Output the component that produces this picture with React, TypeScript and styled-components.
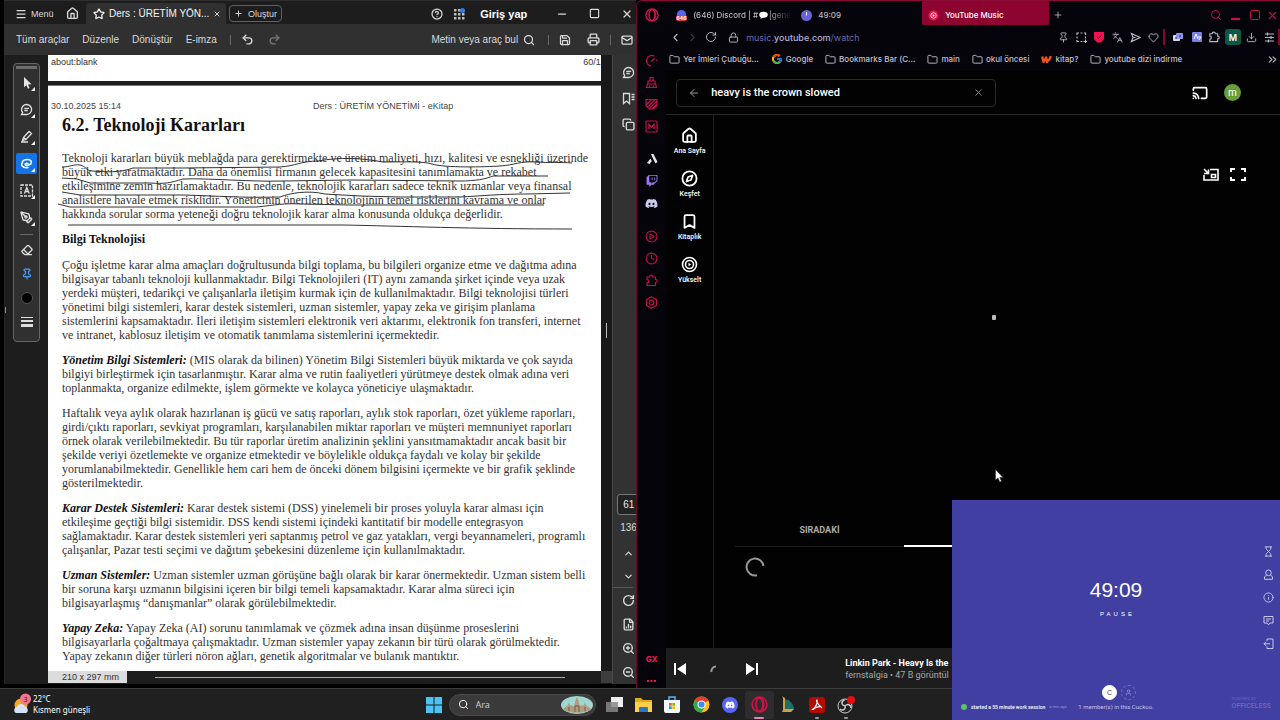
import React from 'react';
import styled, { createGlobalStyle } from 'styled-components';
import {
  Menu, House, Star, X, Plus, CircleHelp, Minus, Square, Undo2, Redo2, Search, Save, Printer, Mail,
  PenTool, Eraser, Pin, Bookmark, Copy, ChevronUp, ChevronDown,
  RotateCw, FileChartColumn, ZoomIn, ZoomOut, ChevronLeft, ChevronRight, Lock, Languages,
  Heart, Download, Folder, ChevronsRight, ArrowLeft, Cast, CirclePlay, Clock,
  Hourglass, User, Info, Compass,
} from 'lucide-react';
import { FaDiscord, FaTwitch } from 'react-icons/fa';
import { FcGoogle } from 'react-icons/fc';

const Global = createGlobalStyle`
  * { box-sizing: border-box; }
  body { margin: 0; background: #000; font-family: "Liberation Sans", Arial, sans-serif; }
  button, input { font: inherit; color: inherit; }
  p, h1, h2 { margin: 0; }
  svg { display: block; flex: none; }
`;

const Desktop = styled.div`
  position: relative;
  display: flex;
  flex-direction: column;
  min-height: 100vh;
  overflow: hidden;
`;
const Windows = styled.main`
  flex: 1;
  display: flex;
`;
const Plain = styled.button<{ $w?: number; $h?: number }>`
  display: inline-flex;
  align-items: center;
  justify-content: center;
  flex: none;
  padding: 0;
  border: 0;
  background: none;
  white-space: nowrap;
  width: ${p => (p.$w ? `${p.$w}px` : 'auto')};
  height: ${p => (p.$h ? `${p.$h}px` : 'auto')};
`;
const Spacer = styled.div`
  flex: 1;
`;
const Gap = styled.span<{ $w: number }>`
  flex: none;
  width: ${p => p.$w}px;
`;

/* ---------- document reader ---------- */

const Reader = styled.section`
  flex: none;
  width: 49.7%;
  min-width: 0;
  display: flex;
  flex-direction: column;
  overflow: hidden;
  padding-bottom: 4px;
  border-left: 4px solid #000;
  background: linear-gradient(#000, #000) bottom / 100% 4px no-repeat #1d1d1d;
  color: #dadada;
  font-size: 10px;
  .lucide { stroke-width: 2.5; }
`;
const ReaderTitle = styled.header`
  display: flex;
  align-items: center;
  height: 24px;
  padding: 2px 0 0 11px;
  border-top: 1px solid #2e2e2e;
`;
const MenuButton = styled(Plain)`
  gap: 4px;
  width: 46px;
  justify-content: flex-start;
  font-size: 9px;
`;
const DocTab = styled.div`
  display: flex;
  align-items: center;
  gap: 4px;
  width: 140px;
  height: 22px;
  padding: 0 7px;
  margin-left: 3px;
  border-radius: 4px 4px 0 0;
  background: #303030;
  color: #f4f4f4;
`;
const TabName = styled.span`
  flex: 1;
  white-space: nowrap;
`;
const CreateButton = styled(Plain)`
  gap: 5px;
  width: 53px;
  height: 17px;
  margin-left: 3px;
  border: 1px solid #606060;
  border-radius: 4px;
  font-size: 9px;
`;
const SignIn = styled(Plain)`
  justify-content: flex-start;
  width: 84px;
  padding-left: 10px;
  color: #fff;
  font-size: 11px;
  font-weight: 700;
`;
const ReaderTools = styled.nav`
  display: flex;
  align-items: center;
  height: 31px;
  padding-left: 12px;
  background: #303030;
`;
const MenuLinks = styled.div`
  display: flex;
  gap: 13px;
  margin-right: 13px;
`;
const Divider = styled.span`
  flex: none;
  width: 1px;
  height: 10px;
  background: #666;
`;
const ReaderBody = styled.div`
  flex: 1;
  display: flex;
`;
const Rail = styled.aside`
  flex: none;
  display: flex;
  align-items: flex-start;
  width: 44px;
  padding-top: 8px;
  border-left: 1px solid #252525;
`;
const RailGrip = styled.span`
  width: 1px;
  height: 6px;
  margin: 244px 7px 0 0;
  background: #888;
`;
const ToolBox = styled.div`
  display: flex;
  flex-direction: column;
  align-items: center;
  width: 27px;
  height: 279px;
  border: 1px solid #666;
  border-radius: 4px;
  background: #303030;
`;
const Grab = styled.span`
  width: 21px;
  height: 3px;
  margin: 2px 0 3px;
  background: #6d6d6d;
`;
const Tool = styled(Plain)<{ $on?: boolean; $more?: boolean; $low?: boolean }>`
  position: relative;
  width: 21px;
  height: ${p => (p.$low ? '20px' : '21px')};
  margin-bottom: ${p => (p.$low ? '4px' : '6px')};
  border-radius: 2px;
  background: ${p => (p.$on ? '#1473e6' : 'none')};
  color: #e0e0e0;
  &::after {
    content: '';
    display: ${p => (p.$more ? 'block' : 'none')};
    position: absolute;
    right: 2px;
    bottom: 2px;
    border: 2px solid transparent;
    border-right-color: #fff;
    border-bottom-color: #fff;
  }
`;
const ToolRule = styled.span`
  width: 13px;
  height: 1px;
  margin: 0 0 5px;
  background: #666;
`;
const Pages = styled.div`
  flex: 1;
  min-width: 0;
  display: flex;
  flex-direction: column;
`;
const PageEnd = styled.div`
  display: flex;
  justify-content: space-between;
  height: 26px;
  padding: 1px 0 0 3px;
  overflow: hidden;
  margin-bottom: 4px;
  background: #fff;
  color: #333;
  font-size: 9px;
  line-height: 12px;
  white-space: nowrap;
`;
const PageNo = styled.span`
  width: 18px;
`;
const Page = styled.article`
  position: relative;
  flex: 1;
  overflow: hidden;
  padding: 15px 0 0 14px;
  border-top: 1px solid #777;
  background: #fff;
  color: #333;
  font: 12px/14px "Liberation Serif", "Times New Roman", serif;
  white-space: nowrap;
`;
const RunningHead = styled.div`
  display: grid;
  grid-template-columns: 262px 1fr;
  margin-left: -11px;
  color: #444;
  font: 9px/10px "Liberation Sans", Arial, sans-serif;
`;
const Chapter = styled.h1`
  margin: 4px 0 16px;
  color: #111;
  font-size: 18px;
  line-height: 20px;
`;
const SubHead = styled.h2`
  margin-bottom: 12px;
  color: #111;
  font-size: 12px;
  line-height: 14px;
`;
const Para = styled.p`
  margin-bottom: 11px;
  &:last-of-type { margin-bottom: 0; }
`;
const Term = styled.em`
  font-weight: 700;
  color: #111;
`;
const PenMarks = styled.svg`
  position: absolute;
  left: 0;
  top: 0;
  fill: none;
  stroke: #333;
  stroke-width: 1;
`;
const PageFoot = styled.footer`
  display: flex;
  align-items: center;
  height: 13px;
  padding-bottom: 1px;
`;
const PageSize = styled.span`
  width: 79px;
  height: 12px;
  padding-left: 14px;
  background: #dcdcdc;
  color: #333;
  font-size: 9px;
  line-height: 12px;
  white-space: nowrap;
`;
const HScroll = styled.span`
  flex: 1;
  height: 1px;
  margin: 0 36px 0 28px;
  background: #aaa;
`;
const VTrack = styled.div`
  flex: none;
  display: flex;
  flex-direction: column;
  align-items: center;
  width: 11px;
  padding-top: 268px;
  background: #191919;
`;
const VThumb = styled.span`
  width: 1px;
  height: 15px;
  background: #bbb;
`;
const Corner = styled.span`
  width: 11px;
  height: 12px;
  margin: auto 0 1px;
  background: #3d3d3d;
`;
const SidePanel = styled.aside`
  flex: none;
  display: flex;
  flex-direction: column;
  align-items: flex-start;
  width: 24px;
  overflow: hidden;
  padding: 5px 0 0 4px;
  border-left: 1px solid #484848;
  background: #323232;
`;
const PageInput = styled.input`
  flex: none;
  width: 28px;
  height: 21px;
  margin: auto 0 7px;
  padding: 0 0 0 5px;
  border: 1px solid #777;
  border-radius: 3px;
  background: #222;
  color: #e8e8e8;
  font-size: 10px;
`;
const PageTotal = styled.span`
  margin: 0 0 8px 3px;
  line-height: 12px;
`;
const SideRule = styled.span`
  flex: none;
  width: 20px;
  height: 1px;
  margin-left: -4px;
  background: #555;
`;

const chapterLines = [
  'Teknoloji kararları büyük meblağda para gerektirmekte ve üretim maliyeti, hızı, kalitesi ve esnekliği üzerinde',
  'büyük etki yaratmaktadır. Daha da önemlisi firmanın gelecek kapasitesini tanımlamakta ve rekabet',
  'etkileşimine zemin hazırlamaktadır. Bu nedenle, teknolojik kararları sadece teknik uzmanlar veya finansal',
  'analistlere havale etmek risklidir. Yöneticinin önerilen teknolojinin temel risklerini kavrama ve onlar',
  'hakkında sorular sorma yeteneği doğru teknolojik karar alma konusunda oldukça değerlidir.',
];
const sections: { term?: string; lines: string[] }[] = [
  {
    lines: [
      'Çoğu işletme karar alma amaçları doğrultusunda bilgi toplama, bu bilgileri organize etme ve dağıtma adına',
      'bilgisayar tabanlı teknoloji kullanmaktadır. Bilgi Teknolojileri (IT) aynı zamanda şirket içinde veya uzak',
      'yerdeki müşteri, tedarikçi ve çalışanlarla iletişim kurmak için de kullanılmaktadır. Bilgi teknolojisi türleri',
      'yönetimi bilgi sistemleri, karar destek sistemleri, uzman sistemler, yapay zeka ve girişim planlama',
      'sistemlerini kapsamaktadır. İleri iletişim sistemleri elektronik veri aktarımı, elektronik fon transferi, internet',
      've intranet, kablosuz iletişim ve otomatik tanımlama sistemlerini içermektedir.',
    ],
  },
  {
    term: 'Yönetim Bilgi Sistemleri:',
    lines: [
      ' (MIS olarak da bilinen) Yönetim Bilgi Sistemleri büyük miktarda ve çok sayıda',
      'bilgiyi birleştirmek için tasarlanmıştır. Karar alma ve rutin faaliyetleri yürütmeye destek olmak adına veri',
      'toplanmakta, organize edilmekte, işlem görmekte ve kolayca yöneticiye ulaşmaktadır.',
    ],
  },
  {
    lines: [
      'Haftalık veya aylık olarak hazırlanan iş gücü ve satış raporları, aylık stok raporları, özet yükleme raporları,',
      'girdi/çıktı raporları, sevkiyat programları, karşılanabilen miktar raporları ve müşteri memnuniyet raporları',
      'örnek olarak verilebilmektedir. Bu tür raporlar üretim analizinin şeklini yansıtmamaktadır ancak basit bir',
      'şekilde veriyi özetlemekte ve organize etmektedir ve böylelikle oldukça faydalı ve kolay bir şekilde',
      'yorumlanabilmektedir. Genellikle hem cari hem de önceki dönem bilgisini içermekte ve bir grafik şeklinde',
      'gösterilmektedir.',
    ],
  },
  {
    term: 'Karar Destek Sistemleri:',
    lines: [
      ' Karar destek sistemi (DSS) yinelemeli bir proses yoluyla karar alması için',
      'etkileşime geçtiği bilgi sistemidir. DSS kendi sistemi içindeki kantitatif bir modelle entegrasyon',
      'sağlamaktadır. Karar destek sistemleri yeri saptanmış petrol ve gaz yatakları, vergi beyannameleri, programlı',
      'çalışanlar, Pazar testi seçimi ve dağıtım şebekesini düzenleme için kullanılmaktadır.',
    ],
  },
  {
    term: 'Uzman Sistemler:',
    lines: [
      ' Uzman sistemler uzman görüşüne bağlı olarak bir karar önermektedir. Uzman sistem belli',
      'bir soruna karşı uzmanın bilgisini içeren bir bilgi temeli kapsamaktadır. Karar alma süreci için',
      'bilgisayarlaşmış “danışmanlar” olarak görülebilmektedir.',
    ],
  },
  {
    term: 'Yapay Zeka:',
    lines: [
      ' Yapay Zeka (AI) sorunu tanımlamak ve çözmek adına insan düşünme proseslerini',
      'bilgisayarlarla çoğaltmaya çalışmaktadır. Uzman sistemler yapay zekanın bir türü olarak görülmektedir.',
      'Yapay zekanın diğer türleri nöron ağları, genetik algoritmalar ve bulanık mantıktır.',
    ],
  },
];

const Lines = ({ lines }: { lines: string[] }) => (
  <>
    {lines.map((line, i) => (
      <React.Fragment key={line}>
        {i > 0 && <br />}
        {line}
      </React.Fragment>
    ))}
  </>
);

const LassoIcon = () => (
  <svg width="13" height="12" viewBox="0 0 13 12" fill="none" stroke="#fff" strokeWidth="1.5" strokeLinecap="round">
    <path d="M2.500 4.500C1.500 2 9 .4 11 3 12.800 6 7.500 8.300 5.500 7 4.300 6 6 5 8 5.500M2.500 4.500C.4 7 2.500 10.500 8 9.500" />
  </svg>
);
const TextBoxIcon = () => (
  <svg width="14" height="13" viewBox="0 0 14 13" fill="none" stroke="#ddd" strokeWidth="1.300">
    <rect x="1" y="1" width="11.500" height="11" strokeDasharray="3 1" />
    <path d="M4.400 9.500 6.800 3.500 9.200 9.500M5.200 7.500H8.400" />
  </svg>
);
const PointerIcon = () => (
  <svg width="10" height="12" viewBox="0 0 10 12" fill="#e6e6e6">
    <path d="M2 0 9.500 7.200 6 7.500 7.600 11 6 11.700 4.400 8.200 2 10.200Z" />
  </svg>
);
const CommentIcon = () => (
  <svg width="13" height="13" viewBox="0 0 13 13" fill="none" stroke="currentColor" strokeWidth="1.300">
    <path d="M1.500 11.500 2.600 9.500A5 5 0 1 1 6.500 11.500Z" />
    <path d="M4.300 5.300h4.800M4.300 7.500h3.500" />
  </svg>
);
const PenIcon = () => (
  <svg width="14" height="13" viewBox="0 0 14 13" fill="none" stroke="currentColor" strokeWidth="1.300">
    <path d="M3.500 7.500 9 1.500 11.500 3.500 6 9.500 2.500 10.500ZM3.500 7.500 6 9.500M1 12H8" />
  </svg>
);
const BookmarkListIcon = () => (
  <svg width="13" height="13" viewBox="0 0 13 13" fill="none" stroke="currentColor" strokeWidth="1.300">
    <path d="M1.500 1.500H7.500V11.500L4.500 9 1.500 11.500ZM9.500 2.500H12.500M9.500 5H12.500M9.500 7.500H12.500" />
  </svg>
);

function ReaderWindow() {
  return (
    <Reader aria-label="Belge">
      <ReaderTitle>
        <MenuButton><Menu size={12} />Menü</MenuButton>
        <Plain $w={22} aria-label="Giriş"><House size={13} /></Plain>
        <DocTab>
          <Star size={12} />
          <TabName>Ders : ÜRETİM YÖN...</TabName>
          <Plain aria-label="Sekmeyi kapat"><X size={8} /></Plain>
        </DocTab>
        <CreateButton><Plus size={9} />Oluştur</CreateButton>
        <Spacer />
        <Plain $w={22} aria-label="Yardım"><CircleHelp size={12} /></Plain>
        <Plain $w={22} aria-label="Uygulamalar">
          <svg width="12" height="12" viewBox="0 0 12 12" fill="#bdbdbd">
            {[0, 4, 8].map(y => [0, 4, 8].map(x => <rect key={`${x}-${y}`} x={x + 1} y={y + 1} width="2.500" height="2.500" />))}
            <circle cx="9.500" cy="2.500" r="2.500" fill="#2b7de0" />
          </svg>
        </Plain>
        <SignIn>Giriş yap</SignIn>
        <Plain $w={16} aria-label="Küçült"><Minus size={12} /></Plain>
        <Plain $w={48} aria-label="Büyüt"><Square size={11} /></Plain>
        <Plain $w={18} aria-label="Kapat"><X size={12} /></Plain>
      </ReaderTitle>
      <ReaderTools>
        <MenuLinks>
          <Plain>Tüm araçlar</Plain>
          <Plain>Düzenle</Plain>
          <Plain>Dönüştür</Plain>
          <Plain>E-imza</Plain>
        </MenuLinks>
        <Divider />
        <Plain $w={34} aria-label="Geri al"><Undo2 size={13} /></Plain>
        <Plain $w={20} aria-label="Yinele"><Redo2 size={13} color="#777" /></Plain>
        <Spacer />
        <Plain>Metin veya araç bul</Plain>
        <Plain $w={22} aria-label="Ara"><Search size={12} /></Plain>
        <Gap $w={8} />
        <Divider />
        <Gap $w={2} />
        <Plain $w={28} aria-label="Kaydet"><Save size={12} /></Plain>
        <Plain $w={28} aria-label="Yazdır"><Printer size={13} /></Plain>
        <Gap $w={3} />
        <Divider />
        <Gap $w={7} />
        <Plain $w={18} aria-label="E-posta"><Mail size={12} /></Plain>
      </ReaderTools>
      <ReaderBody>
        <Rail>
          <RailGrip />
          <ToolBox>
            <Grab />
            <Tool $more aria-label="Seç"><PointerIcon /></Tool>
            <Tool $more aria-label="Yorum"><CommentIcon /></Tool>
            <Tool $more aria-label="Vurgula"><PenIcon /></Tool>
            <Tool $more $on aria-label="Serbest çizim"><LassoIcon /></Tool>
            <Tool $more aria-label="Metin kutusu"><TextBoxIcon /></Tool>
            <Tool $more aria-label="İmza"><PenTool size={13} /></Tool>
            <ToolRule />
            <Tool $low aria-label="Silgi"><Eraser size={12} /></Tool>
            <Tool $low aria-label="Sabitle"><Pin size={12} color="#4b9cf5" /></Tool>
            <Tool $low aria-label="Renk"><svg width="12" height="12"><circle cx="6" cy="6" r="5.500" fill="#000" stroke="#555" /></svg></Tool>
            <Tool $low aria-label="Kalınlık">
              <svg width="12" height="10" fill="#ddd"><path d="M0 0h12v1H0zM0 3h12v2H0zM0 7h12v3H0z" /></svg>
            </Tool>
          </ToolBox>
        </Rail>
        <Pages>
          <PageEnd><span>about:blank</span><PageNo>60/136</PageNo></PageEnd>
          <Page>
            <RunningHead><span>30.10.2025 15:14</span><span>Ders : ÜRETİM YÖNETİMİ - eKitap</span></RunningHead>
            <Chapter>6.2. Teknoloji Kararları</Chapter>
            <Para><Lines lines={chapterLines} /></Para>
            <SubHead>Bilgi Teknolojisi</SubHead>
            {sections.map(s => (
              <Para key={s.lines[0]}>
                {s.term && <Term>{s.term}</Term>}
                <Lines lines={s.lines} />
              </Para>
            ))}
            <PenMarks width="553" height="160" viewBox="48 86 553 160">
              <path d="M62 167C70 167 74 164 80 165 86 166 86 171 92 171 105 172 120 173 133 168L183 168 280 167C295 166 302 161 318 161 340 157 362 158 383 162 400 162 423 161 432 164 445 168 485 167 500 166 515 165 520 161 535 162 550 163 560 162 572 163" />
              <path d="M62 178 77 179 90 183 150 183C165 184 170 183 183 179 210 178 250 182 283 181L350 180 460 181C475 181 486 179 493 176L548 176" />
              <path d="M62 192 80 195 183 195C220 196 240 198 280 197 290 193 308 190 325 194L360 196 400 197 460 197C480 196 500 194 527 194L570 193" />
              <path d="M58 204 70 207 257 207C275 205 285 203 300 204L350 205 544 205" />
              <path d="M68 225 343 225C400 226 470 229 572 229" />
            </PenMarks>
          </Page>
          <PageFoot><PageSize>210 x 297 mm</PageSize><HScroll /></PageFoot>
        </Pages>
        <VTrack><VThumb /><Corner /></VTrack>
        <SidePanel>
          <Plain $w={22} $h={25} aria-label="Yorumlar"><CommentIcon /></Plain>
          <Plain $w={22} $h={26} aria-label="Yer imleri"><BookmarkListIcon /></Plain>
          <Plain $w={22} $h={26} aria-label="Sayfalar"><Copy size={13} /></Plain>
          <PageInput defaultValue="61" aria-label="Sayfa" />
          <PageTotal>136</PageTotal>
          <Plain $w={22} $h={23} aria-label="Önceki"><ChevronUp size={11} /></Plain>
          <Plain $w={22} $h={22} aria-label="Sonraki"><ChevronDown size={11} /></Plain>
          <SideRule />
          <Plain $w={22} $h={24} aria-label="Döndür"><RotateCw size={13} /></Plain>
          <Plain $w={22} $h={24} aria-label="Görünüm"><FileChartColumn size={13} /></Plain>
          <Plain $w={22} $h={24} aria-label="Yakınlaştır"><ZoomIn size={13} /></Plain>
          <Plain $w={22} $h={24} aria-label="Uzaklaştır"><ZoomOut size={13} /></Plain>
        </SidePanel>
      </ReaderBody>
    </Reader>
  );
}

/* ---------- browser ---------- */

const Browser = styled.section`
  flex: 1;
  min-width: 0;
  display: flex;
  background: #05040a;
  border-top: 1px solid #8a0a35;
  border-left: 1px solid #6b0a2a;
  border-radius: 6px 0 0 0;
  color: #b9b6c8;
  font-family: Inter, sans-serif;
  font-size: 8px;
`;
const GxBar = styled.nav`
  flex: none;
  display: flex;
  flex-direction: column;
  align-items: center;
  width: 29px;
  padding-top: 3px;
  color: #c4104a;
`;
const GxGroup = styled.div<{ $first?: boolean }>`
  display: flex;
  flex-direction: column;
  margin: ${p => (p.$first ? '23px 0 11px' : '0 0 11px')};
`;
const GxTail = styled.div`
  display: flex;
  flex-direction: column;
  align-items: center;
  gap: 10px;
  margin-top: auto;
  color: #f01650;
  font-weight: 800;
  line-height: 10px;
`;
const BrowserMain = styled.div`
  flex: 1;
  min-width: 0;
  display: flex;
  flex-direction: column;
`;
const TabStrip = styled.div`
  display: flex;
  align-items: center;
  height: 24px;
  padding: 4px 0 0 4px;
`;
const Tab = styled.button<{ $w: number; $on?: boolean }>`
  flex: 0 1 ${p => p.$w}px;
  min-width: 0;
  display: flex;
  align-items: center;
  gap: 6px;
  height: 20px;
  padding: 0 0 0 6px;
  overflow: hidden;
  border: 0;
  border-radius: 2px;
  background: ${p => (p.$on ? '#8e0431' : 'none')};
  box-shadow: ${p => (p.$on ? '0 -4px 0 #8e0431' : 'none')};
  color: ${p => (p.$on ? '#fff' : '#b9b6c8')};
  font-weight: 500;
  white-space: nowrap;
`;
const FadeText = styled.span`
  display: flex;
  align-items: center;
  gap: 1px;
  flex: none;
  width: 99px;
  overflow: hidden;
  mask-image: linear-gradient(90deg, #000 75%, transparent);
`;
const AddressRow = styled.div`
  display: flex;
  align-items: center;
  height: 24px;
`;
const Url = styled.label`
  flex: 1;
  min-width: 0;
  color: #6f68a8;
  font-size: 9px;
  white-space: nowrap;
`;
const Host = styled.b`
  color: #b5b1d6;
  font-weight: 500;
`;
const Rule = styled.span`
  flex: none;
  width: 2px;
  height: 16px;
  background: #8e0431;
`;
const Profile = styled(Plain)`
  width: 16px;
  height: 16px;
  margin: 0 1px;
  border-radius: 3px;
  background: #0a5848;
  color: #fff;
  font-size: 9px;
  font-weight: 600;
`;
const BookmarkBar = styled.nav`
  display: flex;
  align-items: center;
  gap: 12px;
  height: 20px;
  margin-bottom: 2px;
  padding: 0 1px 0 3px;
`;
const BookmarkLink = styled.a`
  display: flex;
  align-items: center;
  gap: 3px;
  color: #c3c0d0;
  font-weight: 500;
  text-decoration: none;
  white-space: nowrap;
`;

const Music = styled.div`
  flex: 1;
  display: flex;
  flex-direction: column;
  background: #020202;
  font-family: Roboto, sans-serif;
  color: #fff;
`;
const MusicHead = styled.header`
  display: flex;
  align-items: center;
  height: 44px;
  padding: 0 39px 0 10px;
  border-bottom: 1px solid #262626;
`;
const SearchBox = styled.div`
  display: flex;
  align-items: center;
  width: 320px;
  height: 28px;
  padding: 0 11px;
  border: 1px solid #2a2a2a;
  border-radius: 4px;
  color: #999;
`;
const SearchInput = styled.input`
  flex: 1;
  min-width: 0;
  margin-left: 11px;
  padding: 0;
  border: 0;
  background: none;
  color: #fff;
  font-size: 11px;
  font-weight: 500;
`;
const Avatar = styled(Plain)`
  width: 17px;
  height: 17px;
  margin-left: 16px;
  border-radius: 50%;
  background: #689f38;
  font-size: 10px;
`;
const MusicBody = styled.div`
  flex: 1;
  display: flex;
`;
const Guide = styled.nav`
  flex: none;
  display: flex;
  flex-direction: column;
  width: 48px;
  padding-top: 12px;
  border-right: 1px solid #1e1e1e;
  .lucide { stroke-width: 2.5; }
`;
const GuideLink = styled.a`
  display: flex;
  flex-direction: column;
  align-items: center;
  gap: 3px;
  height: 43px;
  color: #fff;
  font-size: 7px;
  font-weight: 500;
  line-height: 9px;
  text-decoration: none;
`;
const Player = styled.div`
  flex: 1;
  display: flex;
  flex-direction: column;
  padding: 50px 23px 0 21px;
`;
const VideoTools = styled.div`
  display: flex;
  justify-content: flex-end;
  gap: 11px;
  padding-right: 11px;
`;
const Video = styled.div`
  flex: 1;
  display: flex;
  align-items: flex-start;
  justify-content: center;
  padding: 132px 4px 0 0;
`;
const Dot = styled.span`
  width: 4px;
  height: 5px;
  border-radius: 1px;
  background: #bbb;
`;
const PanelTabs = styled.div`
  display: flex;
  height: 34px;
  margin-right: 16px;
  border-bottom: 1px solid #1c1c1c;
`;
const PanelTab = styled.button<{ $on?: boolean }>`
  flex: 1;
  margin-bottom: -1px;
  border: 0;
  border-bottom: ${p => (p.$on ? '2px solid #fff' : '0')};
  background: none;
  color: #aaa;
  font-size: 9px;
  font-weight: 700;
`;
const Loading = styled.div`
  height: 101px;
  padding: 10px;
`;
const PlayBar = styled.footer`
  display: flex;
  align-items: center;
  height: 40px;
  padding-top: 2px;
  background: #1d1d1d;
`;
const Song = styled.div`
  margin-left: 77px;
  color: #aaa;
  font-size: 9px;
  line-height: 12px;
  white-space: nowrap;
`;
const SongName = styled.div`
  color: #fff;
  font-weight: 700;
`;

const OperaMark = ({ size, color = '#e0124f' }: { size: number; color?: string }) => (
  <svg width={size} height={size} viewBox="0 0 16 16" fill="none" stroke={color}>
    <circle cx="8" cy="8" r="7" strokeWidth="1.500" />
    <ellipse cx="8" cy="8" rx="3.300" ry="6.300" strokeWidth="1.600" />
    <path d="M10 2C13 4 13 12 10 14" strokeWidth="1" />
  </svg>
);
const SpeedIcon = () => (
  <svg width="13" height="13" viewBox="0 0 13 13" fill="none" stroke="currentColor" strokeWidth="1.200">
    <path d="M9.500 2.200A5.300 5.300 0 1 0 6 12M11.800 5.500V7M6 7.500 9.500 4.500" />
  </svg>
);
const CleanerIcon = () => (
  <svg width="13" height="13" viewBox="0 0 13 13" fill="none" stroke="currentColor" strokeWidth="1.200">
    <path d="M5 5V1.500h3V5M3 8V5h7v3M1.500 11.500 2.500 8h8l1 3.500ZM4.500 11V9.500M8.500 11V9.500" />
  </svg>
);
const ShadeIcon = () => (
  <svg width="13" height="13" viewBox="0 0 13 13" fill="none" stroke="currentColor" strokeWidth="1.200">
    <path d="M1 1.500h11v6L8.500 11h-4L1 7.500ZM1 7 6.500 1.500M2.500 9 10 1.500M4.500 10.500 12 3M7 11 12 6" />
  </svg>
);
const ModsIcon = () => (
  <svg width="13" height="13" viewBox="0 0 13 13" fill="none" stroke="currentColor" strokeWidth="1.200">
    <rect x="1" y="1" width="11" height="11" rx="1" />
    <path d="M4 9V4.500L6.500 7 9 4.500V9" strokeWidth="1.400" />
  </svg>
);
const AriaIcon = () => (
  <svg width="12" height="12" viewBox="0 0 12 12" fill="#e4e4ee">
    <path d="M5 1h2.500L11.500 9 9.500 10.500 6.500 4.500Z" />
    <path d="M4.500 5.500 5.800 8 3.500 11 1 10Z" />
  </svg>
);
const PuzzleIcon = ({ size }: { size: number }) => (
  <svg width={size} height={size} viewBox="0 0 13 13" fill="none" stroke="currentColor" strokeWidth="1.200">
    <path d="M2 3H4.500C4.500 .6 8 .6 8 3H10.500V5.500C12.800 5.500 12.800 8.500 10.500 8.500V11.500H2V9C4.200 9 4.200 5.500 2 5.500Z" />
  </svg>
);
const SnapshotIcon = () => (
  <svg width="11" height="11" viewBox="0 0 11 11" fill="none" stroke="currentColor" strokeWidth="1.200">
    <path d="M1 3V1h2M4.500 1h2M8 1h1.500v2M1 4.500v2M1 8v1.500h2M4.500 9.500h2M9.500 4.500v2M9.500 7.500v3.500M7.500 9.500H11" />
  </svg>
);
const SendIcon = () => (
  <svg width="11" height="11" viewBox="0 0 11 11" fill="none" stroke="currentColor" strokeWidth="1.200">
    <path d="M1.500 1.500 10 5.500 1.500 9.500 3 5.500ZM3 5.500H5.500" />
  </svg>
);
const SetupIcon = () => (
  <svg width="11" height="11" viewBox="0 0 11 11" fill="none" stroke="currentColor" strokeWidth="1.200">
    <path d="M1 2h9M1 5.500h9M1 9h9M3.500 .5v3M7 4v3M4.500 7.500v3" />
  </svg>
);
const FullIcon = () => (
  <svg width="16" height="13" viewBox="0 0 16 13" fill="none" stroke="#fff" strokeWidth="2">
    <path d="M1 4V1h4M11 1h4v3M15 9v3h-4M5 12H1V9" />
  </svg>
);
const MiniIcon = () => (
  <svg width="16" height="13" viewBox="0 0 16 13" fill="none" stroke="#fff" strokeWidth="1.600">
    <path d="M7 1.500h8v10.500H1V7M1 1 5 5M5.500 1.500V5.500H1" />
    <path d="M8.500 6.500h4v3h-4z" />
  </svg>
);
const PrevIcon = () => (
  <svg width="13" height="12" viewBox="0 0 13 12" fill="#fff"><path d="M0 0h2v12H0zM12 0v12L3 6z" /></svg>
);
const NextIcon = () => (
  <svg width="13" height="12" viewBox="0 0 13 12" fill="#fff"><path d="M11 0h2v12h-2zM1 0v12l9-6z" /></svg>
);
const WattpadIcon = () => (
  <svg width="11" height="9" viewBox="0 0 11 9" fill="none" stroke="#f2531b" strokeWidth="2.400" strokeLinejoin="round">
    <path d="M1.200 1.500 2.500 7 5.200 2.500 6 7C7.500 6 9 4 9.800 1.200" />
  </svg>
);

function BrowserWindow() {
  return (
    <Browser aria-label="Tarayıcı">
      <GxBar>
        <Plain $w={22} $h={22} aria-label="Opera"><OperaMark size={14} /></Plain>
        <GxGroup $first>
          <Plain $w={22} $h={22} aria-label="GX Kontrol"><SpeedIcon /></Plain>
          <Plain $w={22} $h={22} aria-label="Temizleyici"><CleanerIcon /></Plain>
          <Plain $w={22} $h={22} aria-label="Gölgelendirici"><ShadeIcon /></Plain>
          <Plain $w={22} $h={22} aria-label="Modlar"><ModsIcon /></Plain>
        </GxGroup>
        <GxGroup>
          <Plain $w={22} $h={22} aria-label="Aria"><AriaIcon /></Plain>
          <Plain $w={22} $h={22} aria-label="Twitch"><FaTwitch size={12} color="#a077ee" /></Plain>
          <Plain $w={22} $h={22} aria-label="Discord"><FaDiscord size={13} color="#c9cbea" /></Plain>
        </GxGroup>
        <GxGroup>
          <Plain $w={22} $h={22} aria-label="Oynatıcı"><CirclePlay size={13} /></Plain>
          <Plain $w={22} $h={22} aria-label="Geçmiş"><Clock size={13} /></Plain>
          <Plain $w={22} $h={22} aria-label="Uzantılar"><PuzzleIcon size={13} /></Plain>
          <Plain $w={22} $h={22} aria-label="Ayarlar">
            <svg width="13" height="13" viewBox="0 0 13 13" fill="none" stroke="currentColor" strokeWidth="1.200">
              <path d="M6.500 .8 11.500 3.600v5.800L6.500 12.200 1.500 9.400V3.600Z" /><circle cx="6.500" cy="6.500" r="2.300" />
            </svg>
          </Plain>
        </GxGroup>
        <GxTail>
          <span>GX</span>
          <Plain $w={22} $h={14} aria-label="Diğer">
            <svg width="9" height="2" fill="currentColor"><path d="M0 0h2v2H0zM3.500 0h2v2h-2zM7 0h2v2H7z" /></svg>
          </Plain>
        </GxTail>
      </GxBar>
      <BrowserMain>
        <TabStrip>
          <Tab $w={125}>
            <svg width="11" height="11" viewBox="0 0 11 11"><circle cx="5.500" cy="4.500" r="4.500" fill="#5865f2" /><rect y="5" width="11" height="6" rx="2" fill="#e03a3e" /><text x="5.500" y="10" textAnchor="middle" fontSize="5" fontWeight="700" fill="#fff">646</text></svg>
            <FadeText>
              (646) Discord | #
              <svg width="9" height="8" viewBox="0 0 9 8"><ellipse cx="4.500" cy="3.700" rx="4.300" ry="3" fill="#fff" /><path d="M2 5 1.500 8 5 6Z" fill="#fff" /></svg>
              |genel
            </FadeText>
          </Tab>
          <Tab $w={127}>
            <svg width="11" height="11" viewBox="0 0 11 11"><circle cx="5.500" cy="5.500" r="5.500" fill="#6a63d8" /><path d="M5.500 5.500V2" stroke="#fff" /></svg>
            49:09
          </Tab>
          <Tab $w={127} $on>
            <svg width="11" height="11" viewBox="0 0 11 11"><circle cx="5.500" cy="5.500" r="5" fill="#f0124a" /><circle cx="5.500" cy="5.500" r="2.700" fill="none" stroke="#fff" strokeWidth=".8" /><path d="M4.700 4 7 5.500 4.700 7z" fill="#fff" /></svg>
            YouTube Music
          </Tab>
          <Plain $w={17} aria-label="Yeni sekme"><Plus size={10} /></Plain>
          <Spacer />
          <Plain $w={20} aria-label="Sekmelerde ara"><Search size={12} color="#c4104a" /></Plain>
          <Plain $w={19} aria-label="Küçült"><svg width="9" height="10"><path d="M0 9h9" stroke="#c4104a" strokeWidth="2" /></svg></Plain>
          <Plain $w={19} aria-label="Büyüt"><Square size={12} color="#c4104a" /></Plain>
          <Plain $w={16} aria-label="Kapat"><X size={13} color="#c4104a" /></Plain>
        </TabStrip>
        <AddressRow>
          <Plain $w={18} aria-label="Geri"><ChevronLeft size={13} /></Plain>
          <Plain $w={17} aria-label="İleri"><ChevronRight size={13} color="#3a3846" /></Plain>
          <Plain $w={20} aria-label="Yenile"><RotateCw size={12} /></Plain>
          <Plain $w={25} aria-label="Site bilgisi"><Lock size={11} /></Plain>
          <Url>music.<Host>youtube.com</Host>/watch</Url>
          <Plain $w={18} aria-label="Sabitle"><Pin size={11} /></Plain>
          <Plain $w={18} aria-label="Anlık görüntü"><SnapshotIcon /></Plain>
          <Plain $w={18} aria-label="Reklam engelleyici">
            <svg width="10" height="11" viewBox="0 0 10 11"><path d="M0 0h10v7L7 10.500H3L0 7Z" fill="#f0124f" /><path d="M3 5 4.500 6.500 7 3.500" stroke="#7a0a2a" fill="none" /></svg>
          </Plain>
          <Plain $w={18} aria-label="Çevir"><Languages size={11} /></Plain>
          <Plain $w={18} aria-label="Gönder"><SendIcon /></Plain>
          <Plain $w={19} aria-label="Beğen"><Heart size={11} /></Plain>
          <Rule />
          <Plain $w={26} aria-label="Oyun uzantısı">
            <svg width="10" height="9" viewBox="0 0 10 9"><rect y="2" width="7" height="6" rx="1" fill="#d5d7f5" /><rect x="3" width="7" height="6" rx="1" fill="#8d95f0" /><path d="M2 5h2M6 3h2" stroke="#222" /></svg>
          </Plain>
          <Plain $w={12} aria-label="Çeviri uzantısı">
            <svg width="10" height="10" viewBox="0 0 10 10"><rect width="10" height="10" rx="1" fill="#7a80ea" /><path d="M2 7 4 2 6 7M6 5h3M7 8l2-3" stroke="#fff" fill="none" /></svg>
          </Plain>
          <Plain $w={21} aria-label="Uzantılar"><PuzzleIcon size={12} /></Plain>
          <Profile>M</Profile>
          <Plain $w={18} aria-label="İndirilenler"><Download size={11} /></Plain>
          <Plain $w={18} aria-label="Kolay kurulum"><SetupIcon /></Plain>
          <Rule />
        </AddressRow>
        <BookmarkBar>
          <BookmarkLink href="#"><Folder size={11} />Yer İmleri Çubuğu...</BookmarkLink>
          <BookmarkLink href="#"><FcGoogle size={12} />Google</BookmarkLink>
          <BookmarkLink href="#"><Folder size={11} />Bookmarks Bar (C...</BookmarkLink>
          <BookmarkLink href="#"><Folder size={11} />main</BookmarkLink>
          <BookmarkLink href="#"><Folder size={11} />okul öncesi</BookmarkLink>
          <BookmarkLink href="#"><WattpadIcon />kitap?</BookmarkLink>
          <BookmarkLink href="#"><Folder size={11} />youtube dizi indirme</BookmarkLink>
          <Spacer />
          <Plain aria-label="Diğer yer imleri"><ChevronsRight size={13} /></Plain>
        </BookmarkBar>
        <Music>
          <MusicHead>
            <SearchBox>
              <Plain aria-label="Geri"><ArrowLeft size={12} /></Plain>
              <SearchInput aria-label="Ara" defaultValue="heavy is the crown slowed" />
              <Plain aria-label="Temizle"><X size={11} /></Plain>
            </SearchBox>
            <Spacer />
            <Plain aria-label="Yayınla"><Cast size={16} strokeWidth={2.5} /></Plain>
            <Avatar>m</Avatar>
          </MusicHead>
          <MusicBody>
            <Guide>
              <GuideLink href="#"><House size={17} />Ana Sayfa</GuideLink>
              <GuideLink href="#"><Compass size={17} />Keşfet</GuideLink>
              <GuideLink href="#"><Bookmark size={17} />Kitaplık</GuideLink>
              <GuideLink href="#">
                <svg width="17" height="17" viewBox="0 0 17 17" fill="none" stroke="#fff" strokeWidth="1.600">
                  <circle cx="8.500" cy="8.500" r="7" /><circle cx="8.500" cy="8.500" r="4" /><path d="M7.500 6.800v3.400l2.700-1.700z" fill="#fff" stroke="none" />
                </svg>
                Yükselt
              </GuideLink>
            </Guide>
            <Player>
              <VideoTools>
                <Plain $h={18} aria-label="Mini oynatıcı"><MiniIcon /></Plain>
                <Plain $h={18} aria-label="Tam ekran"><FullIcon /></Plain>
              </VideoTools>
              <Video><Dot /></Video>
              <PanelTabs>
                <PanelTab>SIRADAKİ</PanelTab>
                <PanelTab $on aria-label="Şarkı sözleri" />
                <PanelTab aria-label="Benzer" />
              </PanelTabs>
              <Loading>
                <svg width="20" height="20" viewBox="0 0 20 20" fill="none" stroke="#999" strokeWidth="2">
                  <path d="M18.500 9A8.500 8.500 0 1 0 12 18.300" />
                </svg>
              </Loading>
            </Player>
          </MusicBody>
          <PlayBar>
            <Plain $w={28} aria-label="Önceki"><PrevIcon /></Plain>
            <Plain $w={40} aria-label="Yükleniyor">
              <svg width="8" height="8" viewBox="0 0 8 8" fill="none" stroke="#999" strokeWidth="2"><path d="M1.500 7C1 4 3 1.500 6 1.500" /></svg>
            </Plain>
            <Plain $w={34} aria-label="Sonraki"><NextIcon /></Plain>
            <Song><SongName>Linkin Park - Heavy Is the</SongName>fernstalgia • 47 B görüntül</Song>
          </PlayBar>
        </Music>
      </BrowserMain>
    </Browser>
  );
}

/* ---------- focus timer ---------- */

const Timer = styled.section`
  position: absolute;
  right: 0;
  bottom: 0;
  display: flex;
  flex-direction: column;
  align-items: center;
  width: 328px;
  height: 220px;
  padding: 76px 0 7px;
  background: #413fa2;
  color: #fff;
`;
const Clockface = styled.div`
  font-size: 21px;
  line-height: 28px;
`;
const Pause = styled(Plain)`
  margin-top: 5px;
  padding-left: 3px;
  font-size: 6px;
  line-height: 10px;
  letter-spacing: 3px;
`;
const TimerIcons = styled.nav`
  position: absolute;
  right: 1px;
  top: 40px;
  display: flex;
  flex-direction: column;
  color: #c9c8f0;
`;
const Members = styled.div`
  display: flex;
  gap: 4px;
  margin: auto 0 0 6px;
`;
const Member = styled.span<{ $on?: boolean }>`
  display: grid;
  place-items: center;
  width: 15px;
  height: 15px;
  border: 1px ${p => (p.$on ? 'solid #fff' : 'dashed #6f6dc4')};
  border-radius: 50%;
  background: ${p => (p.$on ? '#fff' : 'none')};
  color: ${p => (p.$on ? '#444' : '#aaa8e8')};
  font-size: 7px;
`;
const TimerFoot = styled.footer`
  display: grid;
  grid-template-columns: 1fr auto 1fr;
  align-items: center;
  width: 100%;
  height: 13px;
  padding: 0 9px;
  font: 6px/8px Roboto, sans-serif;
  white-space: nowrap;
  color: #c4c3ee;
`;
const Started = styled.span`
  display: flex;
  align-items: center;
  gap: 4px;
  color: #fff;
  font-size: 5px;
  font-weight: 500;
`;
const Green = styled.span`
  width: 6px;
  height: 6px;
  border-radius: 50%;
  background: #56c75c;
`;
const Ago = styled.span`
  color: #9a98dc;
  font-size: 4px;
  font-weight: 400;
`;
const Powered = styled.span`
  justify-self: end;
  margin-top: -8px;
  color: #6765ba;
  font-size: 4px;
  line-height: 6px;
`;
const Brand = styled.span`
  display: block;
  font-size: 7px;
  font-weight: 700;
  line-height: 8px;
`;

function FocusTimer() {
  return (
    <Timer aria-label="Zamanlayıcı">
      <Clockface>49:09</Clockface>
      <Pause>PAUSE</Pause>
      <TimerIcons>
        <Plain $w={22} $h={23} aria-label="Süre"><Hourglass size={11} /></Plain>
        <Plain $w={22} $h={23} aria-label="Profil">
          <svg width="11" height="11" viewBox="0 0 11 11" fill="none" stroke="currentColor"><circle cx="5.500" cy="3.800" r="2.800" /><path d="M3.500 6 1.500 8V10.300H9.500V8L7.500 6" /></svg>
        </Plain>
        <Plain $w={22} $h={23} aria-label="Bilgi"><Info size={11} /></Plain>
        <Plain $w={22} $h={23} aria-label="Sohbet">
          <svg width="11" height="11" viewBox="0 0 11 11" fill="none" stroke="currentColor"><path d="M1 1.500h9v6.500H7L5.500 9.800 4 8H1ZM3 4h5M3 6h3" /></svg>
        </Plain>
        <Plain $w={22} $h={23} aria-label="Çıkış">
          <svg width="11" height="11" viewBox="0 0 11 11" fill="none" stroke="currentColor"><path d="M4 3V1h6v9.500H4V8.500M1 5.800h6M3 3.800 1 5.800 3 7.800" /></svg>
        </Plain>
      </TimerIcons>
      <Members><Member $on>C</Member><Member><User size={7} /></Member></Members>
      <TimerFoot>
        <Started><Green />started a 55 minute work session<Ago>a min ago</Ago></Started>
        <span>1 member(s) in this Cuckoo.</span>
        <Powered>POWERED BY<Brand>OFFICELESS</Brand></Powered>
      </TimerFoot>
    </Timer>
  );
}

/* ---------- taskbar ---------- */

const Bar = styled.footer`
  display: grid;
  grid-template-columns: 1fr auto 1fr;
  align-items: center;
  height: 32px;
  border-top: 1px solid #3c3c3c;
  background: #202020;
  color: #fff;
  font-family: "Noto Sans", sans-serif;
`;
const Weather = styled.button`
  display: flex;
  align-items: center;
  gap: 1px;
  padding: 0 0 2px 13px;
  border: 0;
  background: none;
  font-size: 8px;
  line-height: 11px;
  text-align: left;
`;
const Apps = styled.nav`
  display: flex;
  align-items: center;
`;
const AppButton = styled(Plain)<{ $on?: boolean; $dot?: boolean }>`
  position: relative;
  width: 29px;
  height: 28px;
  border-radius: 3px;
  background: ${p => (p.$on ? '#2d2d2d' : 'none')};
  &::after {
    content: '';
    display: ${p => (p.$on || p.$dot ? 'block' : 'none')};
    position: absolute;
    bottom: 0;
    width: ${p => (p.$on ? '10px' : '4px')};
    height: 2px;
    border-radius: 1px;
    background: ${p => (p.$on ? '#e08ab0' : '#999')};
  }
`;
const TaskSearch = styled.label`
  display: flex;
  align-items: center;
  gap: 7px;
  width: 147px;
  height: 22px;
  margin-right: 4px;
  padding: 0 1px 0 8px;
  border: 1px solid #4a4a4a;
  border-radius: 11px;
  background: #3a3a3a;
`;
const TaskInput = styled.input`
  flex: 1;
  min-width: 0;
  padding: 0;
  border: 0;
  background: none;
  font-size: 9px;
  &::placeholder { color: #ccc; opacity: 1; }
`;

const ChromeMark = () => (
  <svg width="17" height="17" viewBox="0 0 17 17">
    <circle cx="8.500" cy="8.500" r="8" fill="#fbc116" />
    <path d="M8.500 8.500 1.600 4.500A8 8 0 0 1 15.400 4.500Z" fill="#e33b2e" />
    <path d="M8.500 8.500 1.600 4.500A8 8 0 0 0 8.500 16.500L12 10.500Z" fill="#2da94f" />
    <circle cx="8.500" cy="8.500" r="4" fill="#fff" /><circle cx="8.500" cy="8.500" r="3" fill="#4285f4" />
  </svg>
);

function Taskbar() {
  return (
    <Bar>
      <Weather>
        <svg width="19" height="22" viewBox="0 0 19 22">
          <circle cx="8" cy="12" r="6.500" fill="#f5a623" />
          <path d="M3 20a3.500 3.500 0 0 1 1-6.500 4.500 4.500 0 0 1 8 0A3.500 3.500 0 0 1 13 20Z" fill="#d3e3fa" />
          <circle cx="12.500" cy="6" r="5.500" fill="#f0788a" /><text x="12.500" y="9" textAnchor="middle" fontSize="7" fill="#222">3</text>
        </svg>
        <span>22°C<br />Kısmen güneşli</span>
      </Weather>
      <Apps>
        <AppButton aria-label="Başlat">
          <svg width="16" height="16" fill="#4cc2f5"><path d="M0 0h7.500v7.500H0zM8.500 0H16v7.500H8.500zM0 8.500h7.500V16H0zM8.500 8.500H16V16H8.500z" /></svg>
        </AppButton>
        <TaskSearch>
          <Search size={11} />
          <TaskInput placeholder="Ara" aria-label="Ara" />
          <svg width="34" height="18" viewBox="0 0 34 18">
            <ellipse cx="17" cy="9" rx="16" ry="9" fill="#9fd8d2" />
            <path d="M3 13 8 9 9 6 10 9 14 10 16 3 17 1 18 3 20 10 24 9 25 6 26 9 31 13C27 18 7 18 3 13Z" fill="#b09a80" />
            <path d="M15 16V10h4v6M9 15v-4M25 15v-4" stroke="#6f5c4a" fill="none" />
          </svg>
        </TaskSearch>
        <AppButton aria-label="Görev görünümü">
          <svg width="17" height="15" viewBox="0 0 17 15"><path d="M5 0h12v10H5z" fill="#eee" /><path d="M0 5h12v10H0z" fill="#888" opacity=".85" /></svg>
        </AppButton>
        <AppButton aria-label="Dosya Gezgini">
          <svg width="17" height="15" viewBox="0 0 17 15"><path d="M0 1h6l2 2h9v12H0z" fill="#e8a81c" /><path d="M0 5h17v10H0z" fill="#fccf4d" /><path d="M4 15v-4q0-1 1-1h7q1 0 1 1v4z" fill="#2b74c8" /></svg>
        </AppButton>
        <AppButton aria-label="Mağaza">
          <svg width="16" height="17" viewBox="0 0 16 17"><path d="M5 4V1h6v3" fill="none" stroke="#58b5ee" strokeWidth="1.500" /><path d="M0 4h16v11q0 2-2 2H2q-2 0-2-2z" fill="#f3f6fa" /><path d="M5 7h2.700v2.700H5z" fill="#f25022" /><path d="M8.300 7H11v2.700H8.300z" fill="#7fba00" /><path d="M5 10.300h2.700V13H5z" fill="#00a4ef" /><path d="M8.300 10.300H11V13H8.300z" fill="#ffb900" /></svg>
        </AppButton>
        <AppButton aria-label="Chrome"><ChromeMark /></AppButton>
        <AppButton aria-label="Discord">
          <svg width="16" height="16" viewBox="0 0 16 16"><circle cx="8" cy="8" r="8" fill="#5865f2" /><g transform="translate(3 3)"><FaDiscord size={10} color="#fff" /></g></svg>
        </AppButton>
        <AppButton $on aria-label="Opera GX"><OperaMark size={17} color="#d0114a" /></AppButton>
        <AppButton aria-label="Oyun">
          <svg width="14" height="17" viewBox="0 0 14 17"><path d="M4 3C9 4 13 8 13 14H4Z" fill="#1e6e6a" /><path d="M1 0 4 2V13h9L10 16H1L2 14V2Z" fill="#c9a24e" /></svg>
        </AppButton>
        <AppButton $dot aria-label="Acrobat">
          <svg width="16" height="16" viewBox="0 0 16 16"><rect width="16" height="16" rx="3" fill="#b30b00" /><path d="M8 3C6.500 3 9 8 12.500 10.500 13 9 6 9.500 3.500 12.500 5.500 12.500 9 6 8 3Z" fill="none" stroke="#fff" strokeWidth="1.200" /></svg>
        </AppButton>
        <AppButton $dot aria-label="OBS">
          <svg width="18" height="18" viewBox="0 0 18 18" fill="none" stroke="#ccc"><circle cx="8" cy="10" r="7" /><path d="M8 10C4 9 4 5 7.500 4M8 10C11 7 14 9 14 12M8 10C9 14 5 15 3 13" strokeWidth="1.400" /><circle cx="14" cy="4" r="4" fill="#e60f0f" stroke="none" /></svg>
        </AppButton>
      </Apps>
      <span />
    </Bar>
  );
}

const Cursor = styled.svg`
  position: absolute;
  left: 995px;
  top: 469px;
`;

export default function App() {
  return (
    <>
      <Global />
      <Desktop>
        <Windows>
          <ReaderWindow />
          <BrowserWindow />
        </Windows>
        <Taskbar />
        <FocusTimer />
        <Cursor width="9" height="14" viewBox="0 0 9 14">
          <path d="M.5 .5V11L3 9 4.800 13 6.500 12.200 4.800 8.500H8Z" fill="#fff" stroke="#222" strokeWidth=".5" />
        </Cursor>
      </Desktop>
    </>
  );
}
